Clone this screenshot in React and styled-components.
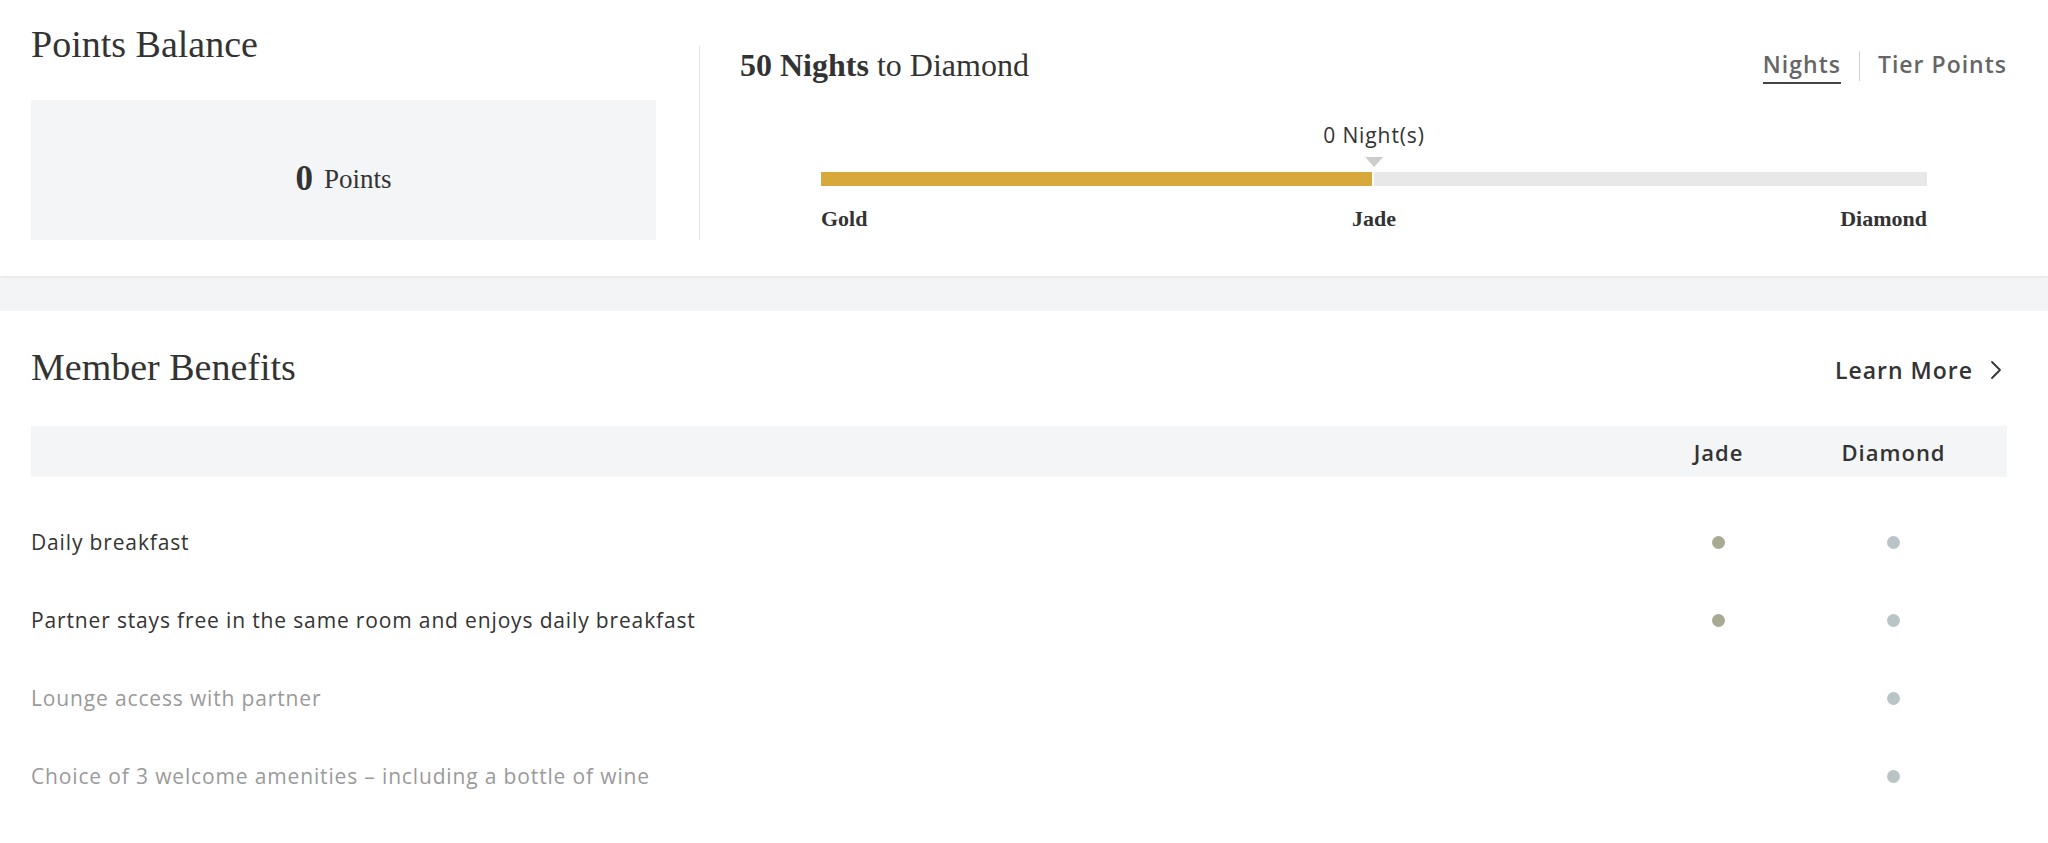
import React from "react";
import styled, { createGlobalStyle } from "styled-components";

const serif = `"Liberation Serif", "DejaVu Serif", serif`;
const sans = `"Open Sans", "DejaVu Sans", sans-serif`;

const GlobalStyle = createGlobalStyle`
  * {
    box-sizing: border-box;
  }
  body {
    margin: 0;
    background: #f3f4f6;
    font-family: ${sans};
    color: #333;
  }
`;

const Page = styled.div`
  width: 2048px;
  min-height: 843px;
  background: #f3f4f6;
  overflow: hidden;
`;

const TopSection = styled.section`
  display: flex;
  align-items: flex-start;
  background: #fff;
  padding: 22px 41px 36px 31px;
  box-shadow: 0 1px 3px rgba(0, 0, 0, 0.08);
`;

const BalanceColumn = styled.div`
  width: 625px;
  flex-shrink: 0;
`;

const SectionTitle = styled.h2`
  margin: 0;
  font-family: ${serif};
  font-weight: 400;
  font-size: 38px;
  line-height: 44px;
  color: #333;
`;

const BalanceBox = styled.div`
  margin-top: 34px;
  height: 140px;
  padding-top: 18px;
  background: #f4f5f7;
  display: flex;
  align-items: center;
  justify-content: center;
  gap: 11px;
  font-family: ${serif};
  color: #333;
`;

const BalanceValue = styled.span`
  font-size: 35px;
  font-weight: 700;
`;

const BalanceUnit = styled.span`
  font-size: 27px;
`;

const Divider = styled.div`
  width: 1px;
  align-self: stretch;
  margin: 24px 0 0 43px;
  background: #e6e6e6;
`;

const ProgressColumn = styled.div`
  flex: 1;
  margin-top: 24px;
  padding-left: 40px;
`;

const ProgressHeader = styled.div`
  display: flex;
  align-items: center;
  justify-content: space-between;
  height: 38px;
`;

const Goal = styled.div`
  font-family: ${serif};
  font-size: 32px;
  color: #333;
  b {
    font-weight: 700;
  }
`;

const Tabs = styled.div`
  display: flex;
  align-items: center;
  gap: 18px;
  padding-top: 2px;
`;

const Tab = styled.button`
  border: 0;
  background: none;
  padding: 0 0 2px;
  font-family: ${sans};
  font-size: 23px;
  font-weight: 600;
  letter-spacing: 1px;
  color: #666;
  cursor: pointer;
  border-bottom: 2px solid ${(p) => (p.$active ? "#444" : "transparent")};
`;

const TabSeparator = styled.span`
  width: 1px;
  height: 30px;
  background: #d0d0d0;
`;

const Track = styled.div`
  margin: 38px 80px 0 81px;
`;

const MarkerRow = styled.div`
  position: relative;
  height: 50px;
`;

const Marker = styled.div`
  position: absolute;
  top: 0;
  transform: translateX(-50%);
  display: flex;
  flex-direction: column;
  align-items: center;
  font-family: ${sans};
  font-size: 21px;
  letter-spacing: 0.9px;
  line-height: 26px;
  color: #333;
  white-space: nowrap;
  &::after {
    content: "";
    margin-top: 9px;
    border-left: 9px solid transparent;
    border-right: 9px solid transparent;
    border-top: 10px solid #cccccc;
  }
`;

const Bar = styled.div`
  display: flex;
  height: 14px;
  background: #e8e8e8;
`;

const BarFill = styled.div`
  background: #d8a83d;
  border-right: 2px solid #fff;
`;

const Tiers = styled.div`
  display: grid;
  grid-template-columns: 1fr auto 1fr;
  margin-top: 19px;
  font-family: ${serif};
  font-weight: 700;
  font-size: 22px;
  line-height: 28px;
  color: #333;
`;

const Tier = styled.span`
  justify-self: ${(p) => p.$align || "center"};
`;

const Band = styled.div`
  height: 35px;
`;

const BenefitsSection = styled.section`
  background: #fff;
  padding: 34px 41px 30px 31px;
`;

const BenefitsHead = styled.div`
  display: flex;
  align-items: center;
  justify-content: space-between;
`;

const LearnMore = styled.a`
  display: flex;
  align-items: center;
  gap: 17px;
  margin: 6px 5px 0 0;
  font-family: ${sans};
  font-size: 23px;
  font-weight: 600;
  letter-spacing: 1px;
  color: #333;
  text-decoration: none;
  cursor: pointer;
`;

const Grid = styled.div`
  display: grid;
  grid-template-columns: 1fr 175px 175px;
  padding-right: 26px;
  align-items: center;
`;

const TableHeader = styled(Grid)`
  margin-top: 37px;
  height: 51px;
  background: #f4f5f7;
  font-family: ${sans};
  font-size: 22px;
  font-weight: 600;
  letter-spacing: 1px;
  color: #333;
  margin-bottom: 26px;
`;

const Cell = styled.div`
  display: flex;
  justify-content: center;
`;

const Row = styled(Grid)`
  height: 78px;
  font-family: ${sans};
  font-size: 21px;
  letter-spacing: 0.85px;
  color: ${(p) => (p.$muted ? "#9a9a9a" : "#333")};
`;

const Dot = styled.span`
  width: 13px;
  height: 13px;
  border-radius: 50%;
  background: ${(p) => (p.$tier === "jade" ? "#a8ab92" : "#b9c4c6")};
`;

const benefits = [
  { label: "Daily breakfast", jade: true, diamond: true },
  { label: "Partner stays free in the same room and enjoys daily breakfast", jade: true, diamond: true },
  { label: "Lounge access with partner", jade: false, diamond: true },
  { label: "Choice of 3 welcome amenities – including a bottle of wine", jade: false, diamond: true },
];

const progress = 50;

export default function App() {
  return (
    <Page>
      <GlobalStyle />
      <TopSection>
        <BalanceColumn>
          <SectionTitle>Points Balance</SectionTitle>
          <BalanceBox>
            <BalanceValue>0</BalanceValue>
            <BalanceUnit>Points</BalanceUnit>
          </BalanceBox>
        </BalanceColumn>
        <Divider />
        <ProgressColumn>
          <ProgressHeader>
            <Goal>
              <b>50 Nights</b> to Diamond
            </Goal>
            <Tabs>
              <Tab $active>Nights</Tab>
              <TabSeparator />
              <Tab>Tier Points</Tab>
            </Tabs>
          </ProgressHeader>
          <Track>
            <MarkerRow>
              <Marker style={{ left: `${progress}%` }}>0 Night(s)</Marker>
            </MarkerRow>
            <Bar>
              <BarFill style={{ width: `${progress}%` }} />
            </Bar>
            <Tiers>
              <Tier $align="start">Gold</Tier>
              <Tier>Jade</Tier>
              <Tier $align="end">Diamond</Tier>
            </Tiers>
          </Track>
        </ProgressColumn>
      </TopSection>
      <Band />
      <BenefitsSection>
        <BenefitsHead>
          <SectionTitle>Member Benefits</SectionTitle>
          <LearnMore>
            Learn More
            <svg width="12" height="20" viewBox="0 0 12 20" fill="none">
              <path d="M2 2l8 8-8 8" stroke="#333" strokeWidth="1.8" strokeLinecap="round" strokeLinejoin="round" />
            </svg>
          </LearnMore>
        </BenefitsHead>
        <TableHeader>
          <span />
          <Cell>Jade</Cell>
          <Cell>Diamond</Cell>
        </TableHeader>
        {benefits.map((b) => (
          <Row key={b.label} $muted={!b.jade}>
            <span>{b.label}</span>
            <Cell>{b.jade && <Dot $tier="jade" />}</Cell>
            <Cell>{b.diamond && <Dot $tier="diamond" />}</Cell>
          </Row>
        ))}
      </BenefitsSection>
    </Page>
  );
}
